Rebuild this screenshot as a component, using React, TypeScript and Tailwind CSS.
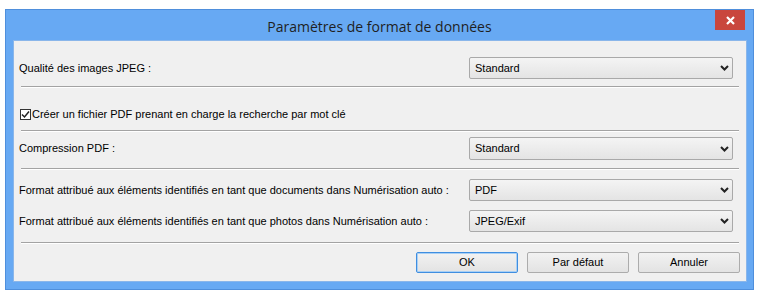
import React from "react";

const font = { fontFamily: '"Liberation Sans", Arial, sans-serif' };

function Chevron() {
  return (
    <svg width="9" height="6" viewBox="0 0 9 6" className="shrink-0">
      <path d="M1 1 L4.5 4.5 L8 1" fill="none" stroke="#222" strokeWidth="2" />
    </svg>
  );
}

function Select({ value, h = "h-[22px]" }: { value: string; h?: string }) {
  return (
    <div
      className={`w-[264px] ${h} shrink-0 flex items-center justify-between pl-[5px] pr-[3px] border border-[#a9a9a9] rounded-[2px] bg-gradient-to-b from-[#f4f4f4] to-[#e4e4e4]`}
    >
      <span className="text-[11px] text-black">{value}</span>
      <Chevron />
    </div>
  );
}

function Sep({ mt }: { mt: string }) {
  return (
    <div className={`${mt} mx-[7px] h-[2px] border-t border-[#a3a3a3] border-b border-b-white`} />
  );
}

function Row({ label, value, mt, h }: { label: string; value: string; mt: string; h?: string }) {
  return (
    <div className={`${mt} flex items-center justify-between pl-[5px] pr-[13px]`}>
      <span className="text-[11px] text-black whitespace-nowrap">{label}</span>
      <Select value={value} h={h} />
    </div>
  );
}

function Button({ label, primary }: { label: string; primary?: boolean }) {
  return (
    <div
      className={`w-[102px] h-[21px] flex items-center justify-center text-[11px] text-black rounded-[2px] bg-gradient-to-b from-[#f2f2f2] to-[#e3e3e3] border ${
        primary ? "border-[#3f8ee0] shadow-[inset_0_0_0_1px_#a9d0f5]" : "border-[#acacac]"
      }`}
    >
      {label}
    </div>
  );
}

export default function App() {
  return (
    <div className="w-[759px] h-[293px] bg-white pl-[5px] pt-[9px]" style={font}>
      <div className="w-[749px] h-[281px] bg-[#67a9f3] border border-[#4f8fdc] flex flex-col">
        <div className="relative h-[30px] shrink-0 flex items-center justify-center">
          <span
            className="text-[14px] text-[#1f1f1f] mt-[2px]"
            style={{ fontFamily: '"Open Sans", "Noto Sans", sans-serif' }}
          >
            Paramètres de format de données
          </span>
          <div className="absolute right-[8px] top-0 w-[30px] h-[20px] bg-[#c9463d] flex items-center justify-center">
            <svg width="9" height="9" viewBox="0 0 9 9">
              <path d="M1 1 L8 8 M8 1 L1 8" stroke="white" strokeWidth="2.2" />
            </svg>
          </div>
        </div>
        <div className="ml-[7px] mr-[6px] mb-[7px] flex-1 bg-[#f0f0f0] border border-[#8ab6ea] flex flex-col">
          <Row label="Qualité des images JPEG :" value="Standard" mt="mt-[16px]" />
          <Sep mt="mt-[7px]" />
          <div className="mt-[15px] h-[22px] flex items-center pl-[6px]">
            <div className="w-[11px] h-[11px] border border-[#333] bg-white flex items-center justify-center mr-[1px]">
              <svg width="9" height="9" viewBox="0 0 9 9">
                <path d="M1 4.5 L3.5 7 L8 1.5" fill="none" stroke="#222" strokeWidth="1.5" />
              </svg>
            </div>
            <span className="text-[11px] text-black">
              Créer un fichier PDF prenant en charge la recherche par mot clé
            </span>
          </div>
          <Sep mt="mt-[5px]" />
          <Row label="Compression PDF :" value="Standard" mt="mt-[5px]" h="h-[23px]" />
          <Sep mt="mt-[8px]" />
          <Row
            label="Format attribué aux éléments identifiés en tant que documents dans Numérisation auto :"
            value="PDF"
            mt="mt-[9px]"
          />
          <Row
            label="Format attribué aux éléments identifiés en tant que photos dans Numérisation auto :"
            value="JPEG/Exif"
            mt="mt-[9px]"
          />
          <Sep mt="mt-[10px]" />
          <div className="mt-[8px] flex justify-end gap-[9px] pr-[6px]">
            <Button label="OK" primary />
            <Button label="Par défaut" />
            <Button label="Annuler" />
          </div>
        </div>
      </div>
    </div>
  );
}
